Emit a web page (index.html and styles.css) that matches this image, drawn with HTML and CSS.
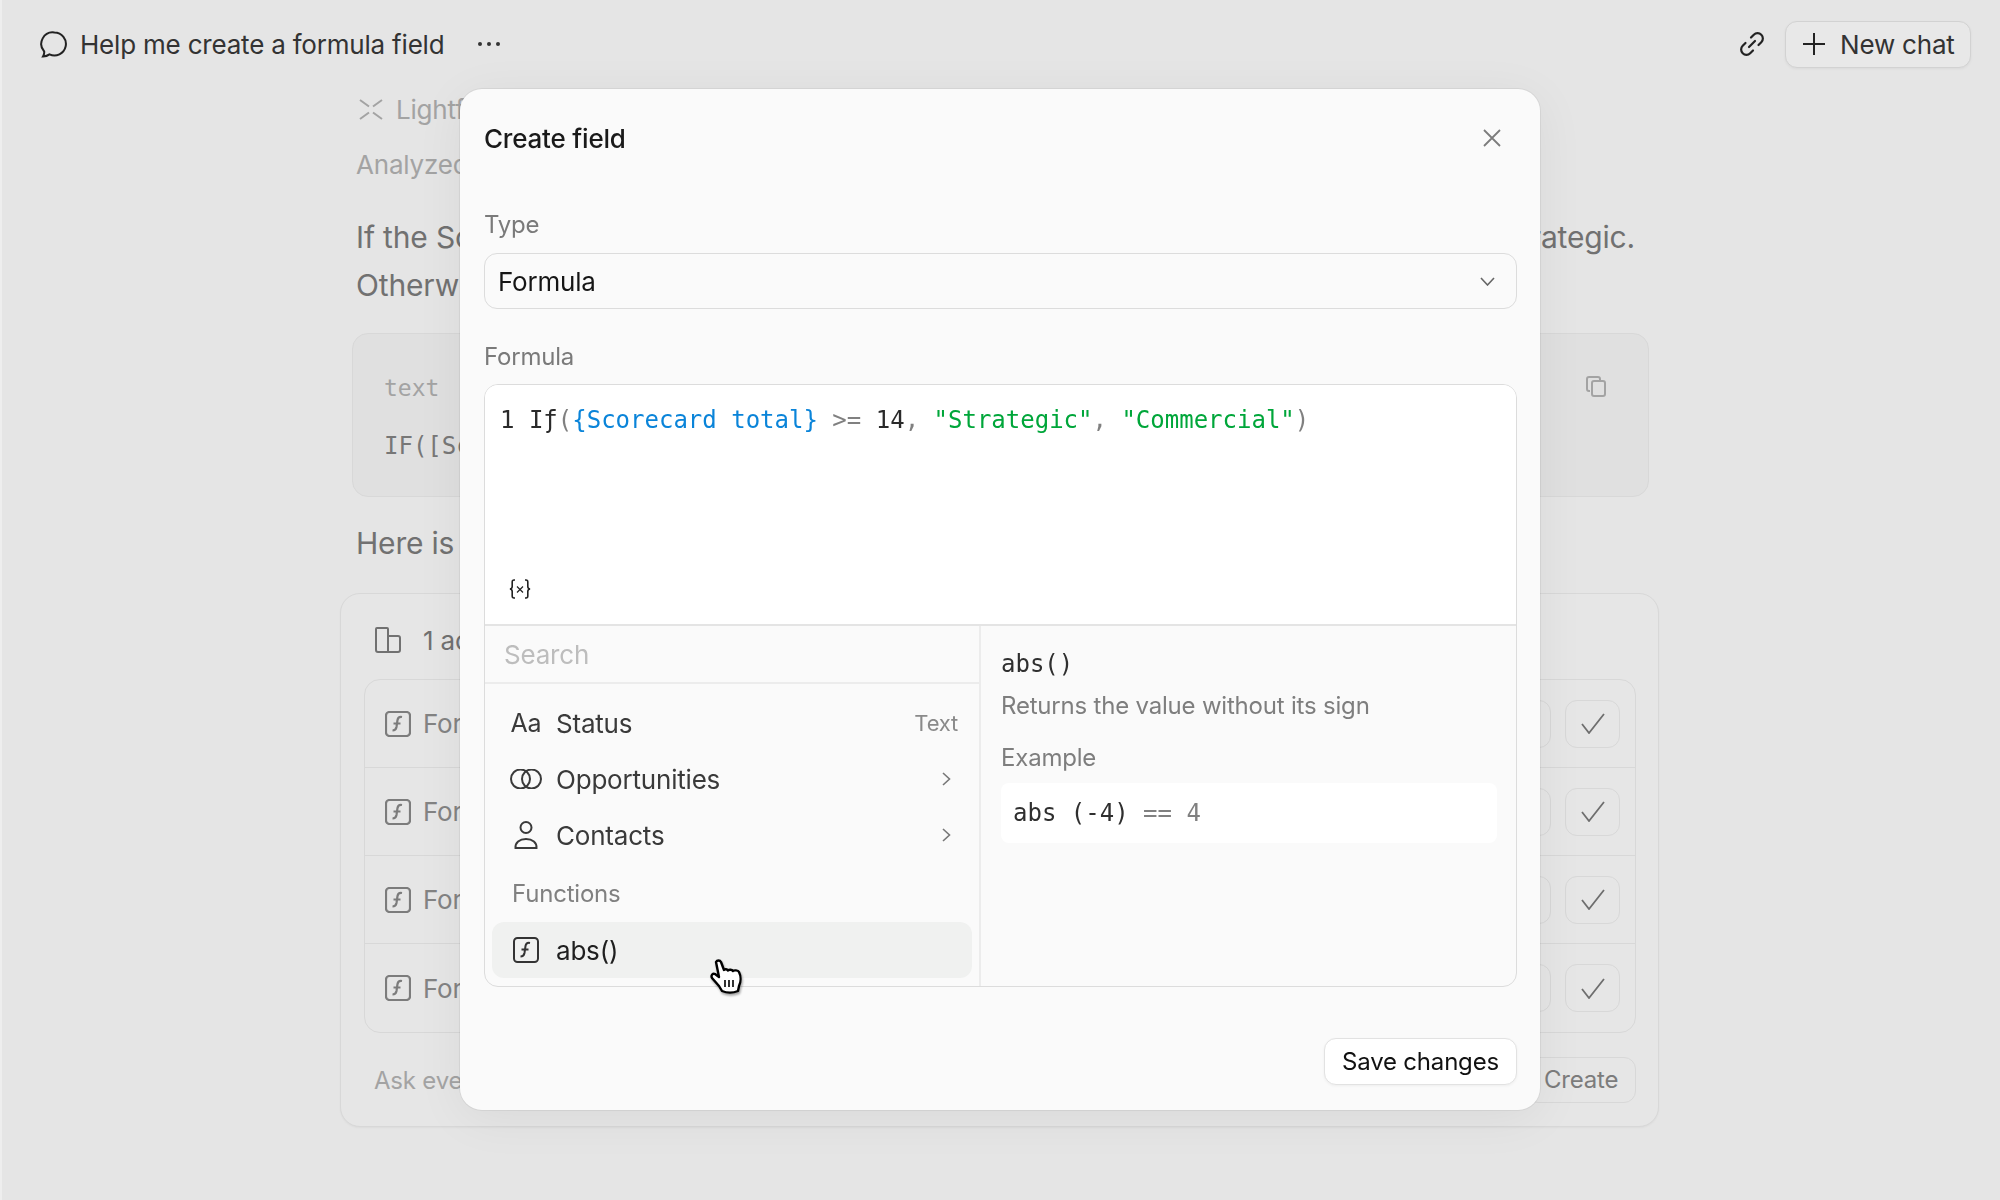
FILE: index.html
```html
<!DOCTYPE html>
<html lang="en">
<head>
    <meta charset="UTF-8">
    <title>Create field</title>
    <link rel="stylesheet" href="styles.css">
</head>
<body>

    <!-- Chat page behind the dialog -->
    <header class="topbar">
        <div class="topbar-left">
            <svg class="chat-icon" viewBox="0 0 27 27"><path d="M14.5 1.5a11.5 11.5 0 1 1-5 21.9c-1.8 1.3-4 2-6.5 2.1 1-1.7 1.4-3.3 1.2-5A11.5 11.5 0 0 1 14.5 1.5z"/></svg>
            <span class="chat-title">Help me create a formula field</span>
            <svg class="dots" viewBox="0 0 24 6"><circle cx="3" cy="3" r="2"/><circle cx="12" cy="3" r="2"/><circle cx="21" cy="3" r="2"/></svg>
        </div>
        <div class="topbar-right">
            <svg class="link-icon" viewBox="0 0 26 26"><path d="M12 6.5l2.8-2.8a5.3 5.3 0 0 1 7.5 7.5L19.5 14M14 19.5l-2.8 2.8a5.3 5.3 0 0 1-7.5-7.5L6.5 12M10 16l6-6"/></svg>
            <button class="new-chat"><svg viewBox="0 0 22 22"><path d="M11 0v22M0 11h22"/></svg>New chat</button>
        </div>
    </header>

    <main class="thread">
        <div class="agent">
            <svg viewBox="0 0 24 21"><path d="M1 1l9 6.5M23 1l-9 6.5M1 20l9-6.5M23 20l-9-6.5"/></svg>
            <span>Lightfield</span>
        </div>
        <div class="analyzed">Analyzed your scorecard</div>
        <p class="answer first">If the Scorecard total is greater than or equal to 14, the formula returns the output Strategic.<br>Otherwise, it returns Commercial.</p>
        <div class="code-card">
            <div class="code-lang">text</div>
            <div class="code-text">IF([Scorecard total] &gt;= 14)</div>
            <svg class="copy-icon" viewBox="0 0 20 21"><path d="M4 15H3a2 2 0 0 1-2-2V3a2 2 0 0 1 2-2h9a2 2 0 0 1 2 2v1"/><rect x="6" y="5" width="13" height="15" rx="2"/></svg>
        </div>
        <p class="answer here">Here is the field</p>
        <section class="actions">
            <div class="actions-head">
                <svg viewBox="0 0 26 26"><path d="M2 1h10a1 1 0 0 1 1 1v23H3a2 2 0 0 1-2-2V2a1 1 0 0 1 1-1zM13 9h10a2 2 0 0 1 2 2v12a2 2 0 0 1-2 2H13"/></svg>
                <span>1 action</span>
            </div>
            <div class="action-list">
                <div class="action-row">
                    <svg class="fn-icon" viewBox="0 0 26 26"><rect x="1" y="1" width="24" height="24" rx="3.5"/><path d="M17 6c-2.5-.5-4 .5-4.5 3l-1 7c-.5 2.5-2 3.5-4 3.5M8.5 12.5h7"/></svg>
                    <span>Formula</span>
                    <div class="action-btns"><div class="ghost-btn"></div><div class="ghost-btn"><svg viewBox="0 0 24 21"><path d="M1 11l7 9L23 1"/></svg></div></div>
                </div>
                <div class="action-row">
                    <svg class="fn-icon" viewBox="0 0 26 26"><rect x="1" y="1" width="24" height="24" rx="3.5"/><path d="M17 6c-2.5-.5-4 .5-4.5 3l-1 7c-.5 2.5-2 3.5-4 3.5M8.5 12.5h7"/></svg>
                    <span>Formula</span>
                    <div class="action-btns"><div class="ghost-btn"></div><div class="ghost-btn"><svg viewBox="0 0 24 21"><path d="M1 11l7 9L23 1"/></svg></div></div>
                </div>
                <div class="action-row">
                    <svg class="fn-icon" viewBox="0 0 26 26"><rect x="1" y="1" width="24" height="24" rx="3.5"/><path d="M17 6c-2.5-.5-4 .5-4.5 3l-1 7c-.5 2.5-2 3.5-4 3.5M8.5 12.5h7"/></svg>
                    <span>Formula</span>
                    <div class="action-btns"><div class="ghost-btn"></div><div class="ghost-btn"><svg viewBox="0 0 24 21"><path d="M1 11l7 9L23 1"/></svg></div></div>
                </div>
                <div class="action-row">
                    <svg class="fn-icon" viewBox="0 0 26 26"><rect x="1" y="1" width="24" height="24" rx="3.5"/><path d="M17 6c-2.5-.5-4 .5-4.5 3l-1 7c-.5 2.5-2 3.5-4 3.5M8.5 12.5h7"/></svg>
                    <span>Formula</span>
                    <div class="action-btns"><div class="ghost-btn"></div><div class="ghost-btn"><svg viewBox="0 0 24 21"><path d="M1 11l7 9L23 1"/></svg></div></div>
                </div>
            </div>
            <div class="actions-foot">
                <span>Ask everything</span>
                <div class="create-btn">Create</div>
            </div>
        </section>
    </main>

    <!-- Create field dialog -->
    <div class="overlay">
        <div class="modal">
            <div class="modal-head">
                <h2>Create field</h2>
                <svg class="close-icon" viewBox="0 0 18 18"><path d="M1 1l16 16M17 1L1 17"/></svg>
            </div>

            <div class="field-label">Type</div>
            <div class="select">
                <span>Formula</span>
                <svg viewBox="0 0 15 9"><path d="M1 1l6.5 7L14 1"/></svg>
            </div>

            <div class="field-label formula-label">Formula</div>
            <div class="editor">
                <div class="editor-top">
                    <div class="code-line">1 <span class="c-dark">Iƒ</span><span class="c-grey">(</span><span class="c-blue">{Scorecard total}</span> <span class="c-grey">&gt;=</span> 14<span class="c-grey">,</span> <span class="c-green">"Strategic"</span><span class="c-grey">,</span> <span class="c-green">"Commercial"</span><span class="c-grey">)</span></div>
                    <svg class="var-icon" viewBox="0 0 22 20"><path d="M6 1H5C3.8 1 3.2 1.7 3.2 3v4.5C3.2 9 2.5 9.7 1 10c1.5.3 2.2 1 2.2 2.5V17c0 1.3.6 2 1.8 2h1M16 1h1c1.2 0 1.8.7 1.8 2v4.5c0 1.5.7 2.2 2.2 2.5-1.5.3-2.2 1-2.2 2.5V17c0 1.3-.6 2-1.8 2h-1"/><path class="thin" d="M8 7.5l6 6M14 7.5l-6 6"/></svg>
                </div>
                <div class="editor-bottom">
                    <div class="picker">
                        <div class="search">Search</div>
                        <div class="picker-list">
                            <div class="picker-row">
                                <span class="row-icon aa">Aa</span>
                                <span class="row-name">Status</span>
                                <span class="row-type">Text</span>
                            </div>
                            <div class="picker-row">
                                <span class="row-icon"><svg viewBox="0 0 32 20"><circle cx="10.5" cy="10" r="9.5"/><circle cx="21.5" cy="10" r="9.5"/></svg></span>
                                <span class="row-name">Opportunities</span>
                                <svg class="row-arrow" viewBox="0 0 9 14"><path d="M1 1l6.5 6L1 13"/></svg>
                            </div>
                            <div class="picker-row">
                                <span class="row-icon"><svg class="person" viewBox="0 0 24 28"><circle cx="12" cy="6.5" r="5.5"/><path d="M1.5 27c-.5-5.5 4-9 10.5-9s11 3.5 10.5 9z"/></svg></span>
                                <span class="row-name">Contacts</span>
                                <svg class="row-arrow" viewBox="0 0 9 14"><path d="M1 1l6.5 6L1 13"/></svg>
                            </div>
                            <div class="picker-group">Functions</div>
                            <div class="picker-row active">
                                <span class="row-icon"><svg class="fn-icon dark" viewBox="0 0 26 26"><rect x="1" y="1" width="24" height="24" rx="3.5"/><path d="M17 6c-2.5-.5-4 .5-4.5 3l-1 7c-.5 2.5-2 3.5-4 3.5M8.5 12.5h7"/></svg></span>
                                <span class="row-name">abs()</span>
                                <svg class="hand" viewBox="-1 -1 32 35"><path d="M5 2C6 0 9 0 10 2l3 8c1-1 3-1 4 .5 1-1 4-1 5 .5 1-1 5-1 6 1 2 4 2 10 0 14l-1 5c-5 2-11 2-16 0l-3-5-7-8c-1.5-3 1-5 3-4l4 3z"/><path class="stripes" d="M14 20v7M18 20v7M22 20v7"/></svg>
                            </div>
                        </div>
                    </div>
                    <div class="fn-doc">
                        <div class="fn-name">abs()</div>
                        <div class="fn-desc">Returns the value without its sign</div>
                        <div class="fn-example">Example</div>
                        <div class="fn-code">abs (-4) <span class="c-grey">== 4</span></div>
                    </div>
                </div>
            </div>

            <div class="modal-foot">
                <button class="save-btn">Save changes</button>
            </div>
        </div>
    </div>

</body>
</html>
```

FILE: styles.css
```css
body {
    margin: 0;
    height: 1200px;
    overflow: hidden;
    background-color: #e5e5e5;
    box-shadow: inset 2px 0 0 #eeeeee;
    font-family: Inter, "Liberation Sans", sans-serif;
    font-size: 24px;
    letter-spacing: -0.2px;
    color: #2c2c2c;
}

svg {
    display: block;
    fill: none;
    stroke: currentColor;
    flex-shrink: 0;
}

/* Top bar */
.topbar {
    height: 88px;
    padding: 0 29px 0 40px;
    display: flex;
    align-items: center;
    justify-content: space-between;
}

.topbar-left,
.topbar-right {
    display: flex;
    align-items: center;
}

.chat-icon {
    width: 27px;
    height: 27px;
    stroke: #222;
    stroke-width: 2;
}

.chat-title {
    margin-left: 13px;
    font-size: 26px;
    color: #333;
}

.dots {
    width: 24px;
    height: 6px;
    margin-left: 33px;
    fill: #333;
    stroke: none;
}

.link-icon {
    width: 26px;
    height: 26px;
    stroke: #222;
    stroke-width: 2.2;
    stroke-linecap: round;
}

.new-chat {
    margin-left: 20px;
    width: 186px;
    height: 47px;
    padding: 0 0 0 17px;
    display: flex;
    align-items: center;
    gap: 15px;
    background: #e8e8e8;
    border: 1px solid #d2d2d2;
    border-radius: 12px;
    box-shadow: 0 1px 3px rgba(0, 0, 0, 0.05);
    font-family: inherit;
    font-size: 26px;
    letter-spacing: inherit;
    color: #333;
}

.new-chat svg {
    width: 22px;
    height: 22px;
    stroke: #222;
    stroke-width: 2;
}

/* Thread */
.thread {
    width: 1320px;
    margin: 0 auto;
}

.agent {
    height: 44px;
    box-sizing: border-box;
    padding: 0 0 1px 19px;
    display: flex;
    align-items: center;
    gap: 13px;
    font-size: 26px;
    color: #a3a3a3;
}

.agent svg {
    width: 24px;
    height: 21px;
    stroke-width: 2;
}

.analyzed {
    margin-top: 16px;
    height: 34px;
    line-height: 34px;
    padding-left: 16px;
    font-size: 26px;
    color: #a3a3a3;
}

.answer {
    margin: 0;
    padding-left: 16px;
    font-size: 30px;
    line-height: 48px;
    color: #717171;
    white-space: nowrap;
}

.answer.first {
    margin-top: 31px;
    letter-spacing: -0.16px;
}

.code-card {
    position: relative;
    margin: 24px 11px 0 12px;
    height: 164px;
    box-sizing: border-box;
    padding: 39px 31px 0;
    background: #e0e0e0;
    border: 1px solid #d8d8d8;
    border-radius: 16px;
    font-family: "DejaVu Sans Mono", monospace;
    letter-spacing: 0;
    color: #777;
}

.code-lang {
    font-size: 23px;
    line-height: 30px;
    color: #a3a3a3;
}

.code-text {
    margin-top: 28px;
    font-size: 24px;
    line-height: 30px;
}

.copy-icon {
    position: absolute;
    top: 42px;
    right: 42px;
    width: 20px;
    height: 21px;
    stroke: #a3a3a3;
    stroke-width: 2;
}

.answer.here {
    margin-top: 22px;
}

.actions {
    margin: 26px 1px 0 0;
    height: 534px;
    box-sizing: border-box;
    background: #e6e6e6;
    border: 1px solid #d8d8d8;
    border-radius: 20px;
    padding: 0 22px 0 23px;
    box-shadow: 0 1px 2px rgba(0, 0, 0, 0.04);
}

.actions-head {
    height: 85px;
    box-sizing: border-box;
    padding-top: 7px;
    margin-left: 11px;
    display: flex;
    align-items: center;
    gap: 22px;
    font-size: 26px;
    color: #717171;
}

.actions-head svg {
    width: 26px;
    height: 26px;
    stroke-width: 2;
}

.action-list {
    border: 1px solid #d8d8d8;
    border-radius: 16px;
}

.action-row {
    height: 88px;
    padding: 0 15px 0 20px;
    display: flex;
    align-items: center;
    gap: 12px;
    border-bottom: 1px solid #d8d8d8;
    box-sizing: border-box;
    font-size: 26px;
    color: #838383;
}

.action-row:last-child {
    border-bottom: none;
}

.fn-icon {
    width: 26px;
    height: 26px;
    stroke: #7c7c7c;
    stroke-width: 2.2;
}

.fn-icon.dark {
    stroke: #333;
}

.action-btns {
    margin-left: auto;
    display: flex;
    gap: 14px;
}

.ghost-btn {
    width: 55px;
    height: 48px;
    display: flex;
    align-items: center;
    justify-content: center;
    border: 1px solid #d8d8d8;
    border-radius: 12px;
    box-sizing: border-box;
}

.ghost-btn svg {
    width: 24px;
    height: 21px;
    stroke: #6e6e6e;
    stroke-width: 1.8;
}

.actions-foot {
    margin-top: 24px;
    padding-left: 10px;
    display: flex;
    align-items: center;
    justify-content: space-between;
    font-size: 24px;
    color: #a3a3a3;
}

.create-btn {
    width: 110px;
    height: 46px;
    line-height: 44px;
    box-sizing: border-box;
    padding-left: 17px;
    border: 1px solid #d8d8d8;
    border-radius: 12px;
    font-size: 24px;
    color: #7c7c7c;
}

/* Dialog */
.overlay {
    position: fixed;
    top: 0;
    left: 0;
    right: 0;
    bottom: 0;
    display: flex;
    justify-content: center;
    align-items: flex-start;
}

.modal {
    width: 1080px;
    height: 1021px;
    margin-top: 89px;
    padding: 0 23px 0 24px;
    box-sizing: border-box;
    background: #fafafa;
    border-radius: 22px;
    box-shadow: 0 0 0 1px rgba(0, 0, 0, 0.06), 0 8px 50px rgba(0, 0, 0, 0.06);
}

.modal-head {
    height: 120px;
    padding-right: 16px;
    display: flex;
    justify-content: space-between;
    align-items: flex-start;
}

.modal-head h2 {
    margin: 34px 0 0;
    font-size: 26px;
    line-height: 32px;
    font-weight: 500;
    color: #1a1a1a;
}

.close-icon {
    margin-top: 40px;
    width: 18px;
    height: 18px;
    stroke: #7c7c7c;
    stroke-width: 1.8;
}

.field-label {
    font-size: 24px;
    line-height: 32px;
    color: #7a7a7a;
}

.select {
    margin-top: 12px;
    height: 56px;
    box-sizing: border-box;
    padding: 0 21px 0 13px;
    display: flex;
    align-items: center;
    justify-content: space-between;
    border: 1px solid #dcdcdc;
    border-radius: 13px;
    font-size: 26px;
    color: #161616;
}

.select svg {
    width: 15px;
    height: 9px;
    stroke: #666;
    stroke-width: 1.6;
}

.formula-label {
    margin-top: 32px;
}

.editor {
    margin-top: 11px;
    height: 603px;
    box-sizing: border-box;
    border: 1px solid #dcdcdc;
    border-radius: 14px;
    display: flex;
    flex-direction: column;
}

.editor-top {
    height: 241px;
    flex-shrink: 0;
    padding: 19px 0 25px 15px;
    box-sizing: border-box;
    background: #fff;
    border-bottom: 2px solid #e4e4e4;
    border-radius: 13px 13px 0 0;
    display: flex;
    flex-direction: column;
    justify-content: space-between;
}

.code-line {
    font-family: "DejaVu Sans Mono", monospace;
    font-size: 24px;
    line-height: 32px;
    letter-spacing: 0;
    color: #2a2a2a;
    white-space: pre;
}

.c-blue { color: #0a84d9; }
.c-green { color: #00a63a; }
.c-grey { color: #808080; }

.var-icon {
    margin-left: 9px;
    width: 22px;
    height: 20px;
    stroke: #222;
    stroke-width: 1.6;
}

.var-icon .thin {
    stroke-width: 1.2;
}

.editor-bottom {
    flex: 1;
    display: flex;
}

.picker {
    width: 496px;
    box-sizing: border-box;
    border-right: 2px solid #ececec;
}

.search {
    height: 56px;
    line-height: 57px;
    padding-left: 19px;
    border-bottom: 2px solid #ececec;
    font-size: 26px;
    color: #bdbdbd;
}

.picker-list {
    padding: 11px 7px 0;
}

.picker-row {
    position: relative;
    height: 56px;
    padding: 0 14px 0 18px;
    display: flex;
    align-items: center;
    border-radius: 12px;
    font-size: 26px;
    color: #3a3a3a;
}

.row-icon {
    width: 32px;
    margin-right: 14px;
    display: flex;
    justify-content: center;
}

.row-icon svg {
    width: 32px;
    height: 20px;
    stroke-width: 2;
}

.row-icon .person {
    width: 24px;
    height: 28px;
}

.row-icon .fn-icon {
    width: 26px;
    height: 26px;
}

.aa {
    font-size: 25px;
}

.row-name {
    flex: 1;
}

.row-type {
    font-size: 22px;
    color: #8a8a8a;
}

.row-arrow {
    width: 9px;
    height: 14px;
    margin-right: 7px;
    stroke: #777;
    stroke-width: 1.6;
}

.picker-group {
    height: 53px;
    line-height: 49px;
    margin-top: 6px;
    padding-left: 20px;
    font-size: 24px;
    color: #808080;
}

.picker-row.active {
    background: #f0f1f0;
    color: #1f1f1f;
}

/* Mouse pointer resting on the active row */
.hand {
    position: absolute;
    left: 218px;
    top: 37px;
    width: 32px;
    height: 35px;
    fill: #fff;
    stroke: #000;
    stroke-width: 2.4;
    stroke-linejoin: round;
    filter: drop-shadow(1px 2px 1px rgba(0, 0, 0, 0.35));
}

.hand .stripes {
    stroke-width: 1.6;
}

.fn-doc {
    flex: 1;
    padding: 0 19px 0 20px;
}

.fn-name {
    margin-top: 22px;
    font-family: "DejaVu Sans Mono", monospace;
    font-size: 24px;
    line-height: 32px;
    letter-spacing: 0;
    color: #2f2f2f;
}

.fn-desc {
    margin-top: 10px;
    line-height: 32px;
    color: #7e7e7e;
}

.fn-example {
    margin-top: 20px;
    line-height: 32px;
    color: #7e7e7e;
}

.fn-code {
    margin-top: 9px;
    height: 60px;
    line-height: 60px;
    padding-left: 12px;
    background: #fff;
    border-radius: 8px;
    font-family: "DejaVu Sans Mono", monospace;
    font-size: 24px;
    letter-spacing: 0;
    color: #2f2f2f;
}

.modal-foot {
    margin-top: 51px;
    display: flex;
    justify-content: flex-end;
}

.save-btn {
    width: 193px;
    height: 47px;
    padding: 0;
    background: #fff;
    border: 1px solid #e2e2e2;
    border-radius: 12px;
    box-shadow: 0 1px 3px rgba(0, 0, 0, 0.05);
    font-family: inherit;
    font-size: 24px;
    letter-spacing: inherit;
    color: #111;
}
```
